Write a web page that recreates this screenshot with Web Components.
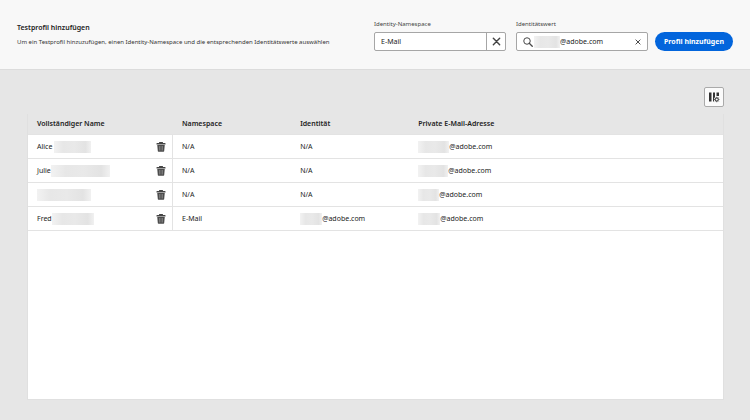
<!DOCTYPE html>
<html lang="de">
<head>
<meta charset="utf-8">
<meta name="viewport" content="width=device-width, initial-scale=1">
<title>Testprofil hinzufügen</title>
<style>
    body {
        margin: 0;
        background: #e6e6e6;
        color: #222;
        font-family: "Noto Sans", "Open Sans", sans-serif;
        font-size: 7px;
        line-height: 12px;
    }
</style>
</head>
<body>
<test-profiles></test-profiles>

<script>
const searchIcon = `
    <svg width="10" height="10" viewBox="0 0 20 20" fill="none" stroke="#484848" stroke-width="2" aria-hidden="true">
        <circle cx="8" cy="8" r="6.5"/>
        <path d="M12.5 12.5 L18.5 18.5" stroke-width="2.6" stroke-linecap="round"/>
    </svg>`;

const crossIcon = (size) => `
    <svg width="${size}" height="${size}" viewBox="0 0 10 10" fill="none" stroke="#444" stroke-width="1.6" stroke-linecap="round" aria-hidden="true">
        <path d="M1.5 1.5 L8.5 8.5 M8.5 1.5 L1.5 8.5"/>
    </svg>`;

const trashIcon = `
    <svg width="10" height="10" viewBox="0 0 20 20" aria-hidden="true">
        <path fill="#444" d="M7 0h6a1 1 0 0 1 1 1v1h4a1 1 0 0 1 1 1v2H1V3a1 1 0 0 1 1-1h4V1a1 1 0 0 1 1-1z"/>
        <path fill="#4c4c4c" d="M2.5 6h15l-1.1 12.1a1.4 1.4 0 0 1-1.4 1.4H5a1.4 1.4 0 0 1-1.4-1.4z"/>
        <path stroke="#999" stroke-width="1.2" d="M7 8v9M10 8v9M13 8v9"/>
    </svg>`;

const columnsIcon = `
    <svg width="12" height="12" viewBox="0 0 24 24" aria-hidden="true">
        <path fill="#333" d="M2 3h5v18H2zM10 3h4v9l-2 3v6h-2zM17 3h5v7h-5z"/>
        <circle cx="17.5" cy="17" r="3.2" fill="none" stroke="#444" stroke-width="2.2"/>
        <path stroke="#444" stroke-width="1.5" d="M17.5 11.5v2M17.5 20.5v2M12 17h2M21 17h2M13.7 13.2l1.3 1.3M21.3 13.2L20 14.5M13.7 20.8l1.3-1.3M21.3 20.8L20 19.5"/>
    </svg>`;

// Grey patch over a hidden part of a name or address
class PrivacyMask extends HTMLElement {
    constructor() {
        super();
        this.attachShadow({ mode: 'open' });
    }

    connectedCallback() {
        this.shadowRoot.innerHTML = `
            <style>
                :host {
                    display: block;
                    flex: none;
                    width: ${this.getAttribute('width')}px;
                    height: 12px;
                    background: linear-gradient(90deg, #f2f2f2, #e7e7e7 25%, #e9e9e9 55%, #e3e3e3 85%, #f1f1f1);
                }
            </style>
        `;
    }
}

class FormField extends HTMLElement {
    constructor() {
        super();
        this.attachShadow({ mode: 'open' });
    }

    connectedCallback() {
        const kind = this.getAttribute('kind');
        this.shadowRoot.innerHTML = `
            <style>
                :host {
                    display: block;
                }
                label {
                    display: block;
                    color: #444;
                    font-size: 6px;
                    margin-bottom: 2px;
                }
                .box {
                    display: flex;
                    align-items: center;
                    box-sizing: border-box;
                    height: 19px;
                    border: 1px solid #a6a6a6;
                    border-radius: 2px;
                    background: #fff;
                    padding-left: 6px;
                }
                .box svg {
                    flex: none;
                    display: block;
                }
                input {
                    flex: 1;
                    min-width: 0;
                    padding: 0;
                    border: 0;
                    outline: 0;
                    background: none;
                    color: #222;
                    font: inherit;
                }
                button {
                    display: flex;
                    align-items: center;
                    justify-content: center;
                    align-self: stretch;
                    width: 19px;
                    padding: 0;
                    border: 0;
                    background: none;
                }
                .picker button {
                    border-left: 1px solid #a6a6a6;
                }
            </style>
            <label for="value">${this.getAttribute('label')}</label>
            <div class="box ${kind}">
                ${kind === 'search' ? searchIcon : ''}
                <slot></slot>
                <input id="value" type="text" value="${this.getAttribute('value')}">
                <button type="button" aria-label="Löschen">${crossIcon(kind === 'search' ? 6 : 9)}</button>
            </div>
        `;
    }
}

class ProfileForm extends HTMLElement {
    constructor() {
        super();
        this.attachShadow({ mode: 'open' });
    }

    connectedCallback() {
        this.shadowRoot.innerHTML = `
            <style>
                :host {
                    display: flex;
                    align-items: flex-start;
                    box-sizing: border-box;
                    padding: 18px 17px;
                    border-bottom: 1px solid #dcdcdc;
                    background: #f8f8f8;
                }
                .intro {
                    flex: 1;
                    padding-top: 4px;
                }
                h1 {
                    margin: 0 0 2px;
                    font-size: 7px;
                    line-height: 12px;
                    font-weight: 600;
                }
                p {
                    margin: 0;
                    font-size: 6px;
                    color: #333;
                }
                form {
                    display: flex;
                    align-items: flex-end;
                }
                form-field {
                    width: 132px;
                    margin-right: 10px;
                }
                form-field:last-of-type {
                    margin-right: 7px;
                }
                privacy-mask {
                    margin-left: 1px;
                }
                .add {
                    height: 19px;
                    min-width: 78px;
                    padding: 0 8px;
                    border: 0;
                    border-radius: 10px;
                    background: #0265dc;
                    color: #fff;
                    font: inherit;
                    font-weight: 700;
                }
            </style>
            <div class="intro">
                <h1>Testprofil hinzufügen</h1>
                <p>Um ein Testprofil hinzuzufügen, einen Identity-Namespace und die entsprechenden Identitätswerte auswählen</p>
            </div>
            <form>
                <form-field kind="picker" label="Identity-Namespace" value="E-Mail"></form-field>
                <form-field kind="search" label="Identitätswert" value="@adobe.com">
                    <privacy-mask width="26"></privacy-mask>
                </form-field>
                <button class="add" type="button">Profil hinzufügen</button>
            </form>
        `;
    }
}

const profiles = [
    { name: 'Alice', nameMask: 37, namespace: 'N/A', identity: 'N/A', mailMask: 31 },
    { name: 'Julie', nameMask: 59, namespace: 'N/A', identity: 'N/A', mailMask: 30 },
    { name: '', nameMask: 54, namespace: 'N/A', identity: 'N/A', mailMask: 21 },
    { name: 'Fred', nameMask: 42, namespace: 'E-Mail', identity: '@adobe.com', identityMask: 22, mailMask: 22 }
];

const mask = (width) => width ? `<privacy-mask width="${width}"></privacy-mask>` : '';

class ProfileTable extends HTMLElement {
    constructor() {
        super();
        this.attachShadow({ mode: 'open' });
    }

    connectedCallback() {
        this.shadowRoot.innerHTML = `
            <style>
                :host {
                    display: block;
                    background: #fff;
                    border: 1px solid #e0e0e0;
                    border-top: 0;
                }
                table {
                    width: 100%;
                    table-layout: fixed;
                    border-collapse: separate;
                    border-spacing: 0;
                }
                th, td {
                    box-sizing: border-box;
                    padding: 0 0 0 9px;
                    text-align: left;
                    white-space: nowrap;
                    border-bottom: 1px solid #e3e3e3;
                }
                th {
                    height: 21px;
                    background: #e6e6e6;
                    font-weight: 600;
                }
                td {
                    height: 24px;
                }
                td:first-child {
                    border-right: 1px solid #e3e3e3;
                }
                .cell {
                    display: flex;
                    align-items: center;
                }
                .alice privacy-mask {
                    margin-left: 2px;
                }
                button {
                    display: block;
                    padding: 0;
                    margin: 0 6px 0 auto;
                    border: 0;
                    background: none;
                }
                svg {
                    display: block;
                }
                .col-name { width: 145px; }
                .col-short { width: 17%; }
            </style>
            <table>
                <colgroup><col class="col-name"><col class="col-short"><col class="col-short"><col></colgroup>
                <thead>
                    <tr>
                        <th scope="col">Vollständiger Name</th>
                        <th scope="col">Namespace</th>
                        <th scope="col">Identität</th>
                        <th scope="col">Private E-Mail-Adresse</th>
                    </tr>
                </thead>
                <tbody>
                    ${profiles.map((p) => `
                        <tr>
                            <td>
                                <div class="cell ${p.name.toLowerCase()}">
                                    ${p.name}${mask(p.nameMask)}
                                    <button type="button" aria-label="Profil löschen">${trashIcon}</button>
                                </div>
                            </td>
                            <td>${p.namespace}</td>
                            <td><div class="cell">${mask(p.identityMask)}${p.identity}</div></td>
                            <td><div class="cell">${mask(p.mailMask)}@adobe.com</div></td>
                        </tr>`).join('')}
                </tbody>
            </table>
        `;
    }
}

class TestProfiles extends HTMLElement {
    constructor() {
        super();
        this.attachShadow({ mode: 'open' });
    }

    connectedCallback() {
        this.shadowRoot.innerHTML = `
            <style>
                :host {
                    display: flex;
                    flex-direction: column;
                    min-height: 100vh;
                }
                main {
                    flex: 1;
                    display: flex;
                    flex-direction: column;
                    padding: 17px 26px 20px 27px;
                }
                .columns {
                    display: flex;
                    align-items: center;
                    justify-content: center;
                    align-self: flex-end;
                    width: 20px;
                    height: 20px;
                    margin-bottom: 7px;
                    padding: 0;
                    border: 1px solid #aaa;
                    border-radius: 2px;
                    background: #fbfbfb;
                }
                profile-table {
                    flex: 1;
                }
            </style>
            <profile-form></profile-form>
            <main>
                <button class="columns" type="button" aria-label="Spalten anpassen">${columnsIcon}</button>
                <profile-table></profile-table>
            </main>
        `;
    }
}

customElements.define('privacy-mask', PrivacyMask);
customElements.define('form-field', FormField);
customElements.define('profile-form', ProfileForm);
customElements.define('profile-table', ProfileTable);
customElements.define('test-profiles', TestProfiles);
</script>
</body>
</html>
